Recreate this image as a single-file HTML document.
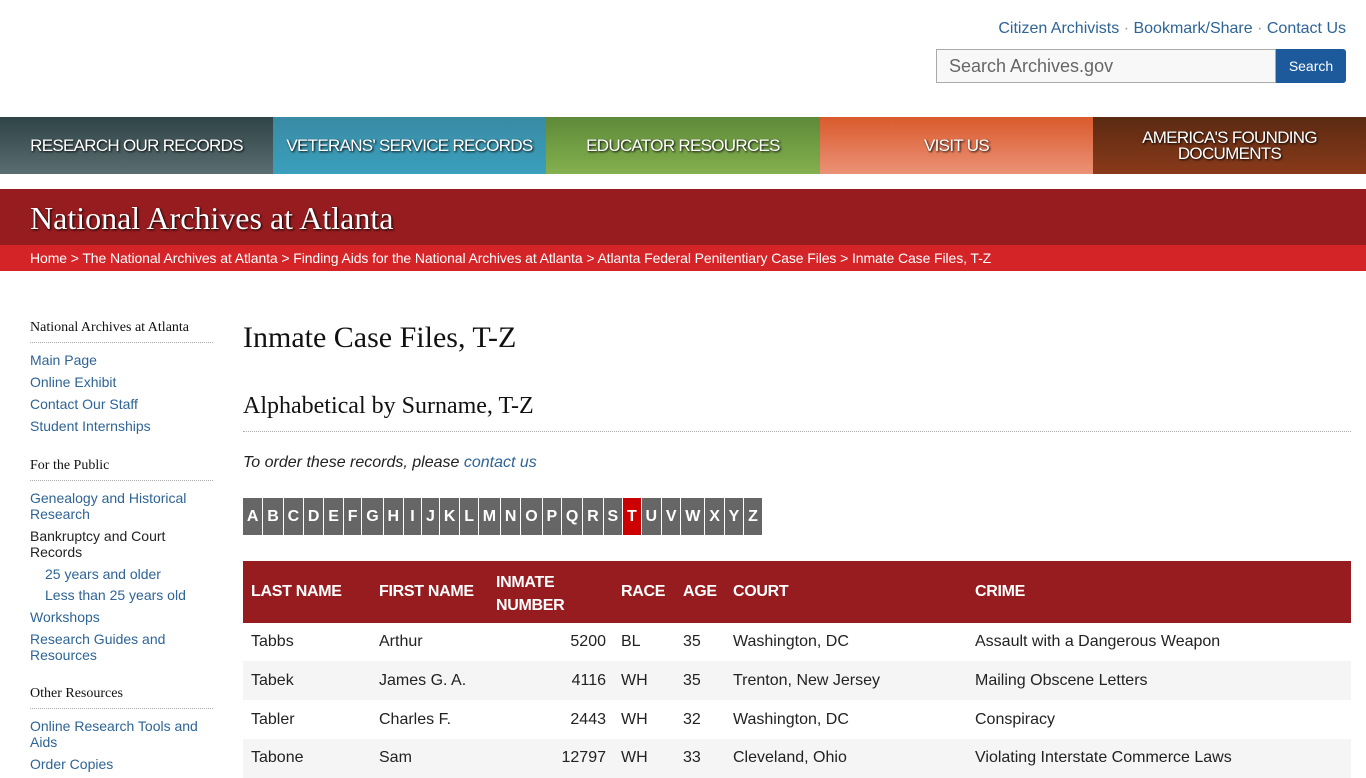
<!DOCTYPE html>
<html><head><meta charset="utf-8"><style>
*{margin:0;padding:0;box-sizing:border-box}
body{width:1366px;height:768px;overflow:hidden;background:#fff;font-family:"Liberation Sans",Arial,sans-serif;position:relative}
a{color:#205493;text-decoration:none}
.abs{position:absolute}
.toplinks{right:20px;top:20px;font-size:16px;color:#999}
.toplinks a{color:#2e6496}
.search{left:936px;top:49px;width:340px;height:34px;border:1px solid #aaa;background:#f8f8f8;font-size:18px;color:#666;padding:6px 12px}
.sbtn{left:1276px;top:49px;width:70px;height:34px;background:#1d5a9b;color:#fff;font-size:14px;text-align:center;line-height:34px;border-radius:0 3px 3px 0}
.nav{top:117px;height:57px;color:#fff;font-size:17px;text-align:center;display:flex;align-items:center;justify-content:center;text-shadow:1px 1px 2px #000;line-height:16px;letter-spacing:-0.7px}
.banner{left:0;top:189px;width:1366px;height:56px;background:#961c1f}
.banner h1{font-family:"Liberation Serif",serif;font-weight:normal;color:#fff;font-size:32px;position:absolute;left:30px;top:11px;text-shadow:1px 1px 2px #000}
.crumb{left:0;top:245px;width:1366px;height:26px;background:#d52428;color:#fff;font-size:14px;padding:5px 30px;letter-spacing:-0.1px}
.crumb a{color:#fff}
.side{left:30px;width:183px;font-size:14px;line-height:16px}
.side h4{font-family:"Liberation Serif",serif;font-weight:normal;font-size:14px;color:#111;border-bottom:1px dotted #aaa;padding-bottom:6px;margin-bottom:9px}
.side a,.side span{display:block;margin-bottom:6px;color:#2e6496}
.side span{color:#222}
.side .in{padding-left:15px}
h2{font-family:"Liberation Serif",serif;font-weight:normal;font-size:30px;color:#111}
h3{font-family:"Liberation Serif",serif;font-weight:normal;font-size:24px;color:#111}
.alpha{left:243px;top:498px;display:flex;height:37px}
.alpha div{background:#666;color:#fff;font-weight:bold;font-size:16px;line-height:37px;padding:0 3.9px;border-right:1px solid #fff;min-width:18px;text-align:center}
.alpha div.on{background:#c00}
.th{left:243px;top:561px;width:1108px;height:62px;background:#961c1f;color:#fff;font-weight:bold;font-size:16px;letter-spacing:-0.3px}
.th div,.row div{position:absolute}
.row{left:243px;width:1108px;height:39px;font-size:16px;color:#222}
</style></head><body>
<div class="abs toplinks"><a>Citizen Archivists</a> · <a>Bookmark/Share</a> · <a>Contact Us</a></div>
<div class="abs search">Search Archives.gov</div>
<div class="abs sbtn">Search</div>

<div class="abs nav" style="left:0;width:273px;background:linear-gradient(#2f4447,#5a6d70)">RESEARCH OUR RECORDS</div>
<div class="abs nav" style="left:273px;width:273px;background:linear-gradient(#3a8aa3,#3aa0bd)">VETERANS' SERVICE RECORDS</div>
<div class="abs nav" style="left:546px;width:274px;background:linear-gradient(#5e8a3a,#84b04e)">EDUCATOR RESOURCES</div>
<div class="abs nav" style="left:820px;width:273px;background:linear-gradient(#d95a2c,#eb9277)">VISIT US</div>
<div class="abs nav" style="left:1093px;width:273px;background:linear-gradient(#5a2a12,#8a3a1a)">AMERICA'S FOUNDING<br>DOCUMENTS</div>

<div class="abs banner"><h1>National Archives at Atlanta</h1></div>
<div class="abs crumb"><a>Home</a> &gt; <a>The National Archives at Atlanta</a> &gt; <a>Finding Aids for the National Archives at Atlanta</a> &gt; <a>Atlanta Federal Penitentiary Case Files</a> &gt; Inmate Case Files, T-Z</div>

<div class="abs side" style="top:320px">
<h4>National Archives at Atlanta</h4>
<a>Main Page</a><a>Online Exhibit</a><a>Contact Our Staff</a><a>Student Internships</a>
</div>
<div class="abs side" style="top:458px">
<h4>For the Public</h4>
<a>Genealogy and Historical Research</a><span>Bankruptcy and Court Records</span><a class="in" style="margin-bottom:5px">25 years and older</a><a class="in">Less than 25 years old</a><a>Workshops</a><a>Research Guides and Resources</a>
</div>
<div class="abs side" style="top:686px">
<h4>Other Resources</h4>
<a>Online Research Tools and Aids</a><a>Order Copies</a>
</div>

<h2 class="abs" style="left:243px;top:321px">Inmate Case Files, T-Z</h2>
<h3 class="abs" style="left:243px;top:393px">Alphabetical by Surname, T-Z</h3>
<div class="abs" style="left:243px;top:431px;width:1108px;border-top:1px dotted #aaa"></div>
<div class="abs" style="left:243px;top:454px;font-size:16px;font-style:italic;color:#222">To order these records, please <a style="color:#2e6496">contact us</a></div>

<div class="abs alpha"><div>A</div><div>B</div><div>C</div><div>D</div><div>E</div><div>F</div><div>G</div><div>H</div><div>I</div><div>J</div><div>K</div><div>L</div><div>M</div><div>N</div><div>O</div><div>P</div><div>Q</div><div>R</div><div>S</div><div class="on">T</div><div>U</div><div>V</div><div>W</div><div>X</div><div>Y</div><div>Z</div></div>

<div class="abs th">
<div style="left:8px;top:22px">LAST NAME</div><div style="left:136px;top:22px">FIRST NAME</div><div style="left:253px;top:10px;line-height:23px">INMATE<br>NUMBER</div><div style="left:378px;top:22px">RACE</div><div style="left:440px;top:22px">AGE</div><div style="left:490px;top:22px">COURT</div><div style="left:732px;top:22px">CRIME</div>
</div>
<div class="abs row" style="top:622px"><div style="left:8px;top:11px">Tabbs</div><div style="left:136px;top:11px">Arthur</div><div style="right:745px;top:11px">5200</div><div style="left:378px;top:11px">BL</div><div style="left:440px;top:11px">35</div><div style="left:490px;top:11px">Washington, DC</div><div style="left:732px;top:11px">Assault with a Dangerous Weapon</div></div>
<div class="abs row" style="top:661px;background:#f5f5f5"><div style="left:8px;top:11px">Tabek</div><div style="left:136px;top:11px">James G. A.</div><div style="right:745px;top:11px">4116</div><div style="left:378px;top:11px">WH</div><div style="left:440px;top:11px">35</div><div style="left:490px;top:11px">Trenton, New Jersey</div><div style="left:732px;top:11px">Mailing Obscene Letters</div></div>
<div class="abs row" style="top:700px"><div style="left:8px;top:11px">Tabler</div><div style="left:136px;top:11px">Charles F.</div><div style="right:745px;top:11px">2443</div><div style="left:378px;top:11px">WH</div><div style="left:440px;top:11px">32</div><div style="left:490px;top:11px">Washington, DC</div><div style="left:732px;top:11px">Conspiracy</div></div>
<div class="abs row" style="top:739px;background:#f5f5f5"><div style="left:8px;top:10px">Tabone</div><div style="left:136px;top:10px">Sam</div><div style="right:745px;top:10px">12797</div><div style="left:378px;top:10px">WH</div><div style="left:440px;top:10px">33</div><div style="left:490px;top:10px">Cleveland, Ohio</div><div style="left:732px;top:10px">Violating Interstate Commerce Laws</div></div>
</body></html>
